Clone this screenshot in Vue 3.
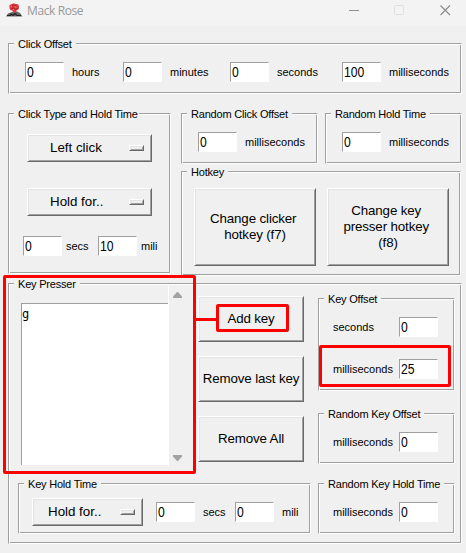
<script setup>
import { ref } from 'vue'

const offsets = ref([
  { value: '0', unit: 'hours' },
  { value: '0', unit: 'minutes' },
  { value: '0', unit: 'seconds' },
  { value: '100', unit: 'milliseconds' },
])
const hotkeys = ['Change clicker \nhotkey (f7)', 'Change key \npresser hotkey \n(f8)']
const keyActions = ['Add key', 'Remove last key', 'Remove All']
const keys = ref(['g'])
</script>

<template>
  <div class="window">
    <header class="titlebar">
      <svg class="logo" width="17" height="15" viewBox="0 0 17 15">
        <path d="M0 13.500 2 10.500 5 9.500 7 8.500 11 8.500 14 10 16.500 13.500Z" fill="#666" />
        <path d="M1 12.500h3l1-1.500 2 1.500 2-2 2 2h4" fill="none" stroke="#222" stroke-width="1.200" />
        <path d="M3.500 2 6 1 7.500.3 9.500 1 12 1.200 13 3 12.800 6 10.500 7.500 10 9.500H7.500L7 8 4.500 7 3.500 5.500Z" fill="#dd3a42" />
        <path d="M6 3 8.500 2l2.500 1.500M5 5.500l3-.5 1.500 1.500L12 5" fill="none" stroke="#9c1e26" stroke-width=".8" />
        <path d="M5 3.500h1M9 4h1.500M7 6.500h1" stroke="#f3878b" />
      </svg>
      <span class="title">Mack Rose</span>
      <svg class="controls" width="102" height="12" viewBox="0 0 102 12">
        <path d="M0 5.500h10" stroke="#8f8f8f" />
        <rect x="45.500" y=".5" width="9" height="9" rx="1" fill="none" stroke="#dedede" />
        <path d="m91.500.5 9.500 9.500m0-9.500-9.500 9.500" stroke="#8a8a8a" stroke-width="1.100" fill="none" />
      </svg>
    </header>

    <main>
      <section class="group">
        <h2>Click Offset</h2>
        <div class="fields offsets">
          <label v-for="o in offsets" :key="o.unit" class="field">
            <span class="entry"><b>{{ o.value }}</b></span>{{ o.unit }}
          </label>
        </div>
      </section>

      <div class="middle">
        <section class="group click-type">
          <h2 class="tight">Click Type and Hold Time</h2>
          <div class="select">Left click<i></i></div>
          <div class="select">Hold for..<i></i></div>
          <div class="durations">
            <label class="field"><span class="entry"><b>0</b></span>secs</label>
            <label class="field"><span class="entry"><b>10</b></span>mili</label>
          </div>
        </section>
        <div class="middle-right">
          <div class="pair">
            <section class="group small">
              <h2>Random Click Offset</h2>
              <div class="fields"><label class="field"><span class="entry"><b>0</b></span>milliseconds</label></div>
            </section>
            <section class="group small">
              <h2>Random Hold Time</h2>
              <div class="fields"><label class="field"><span class="entry"><b>0</b></span>milliseconds</label></div>
            </section>
          </div>
          <section class="group hotkey">
            <h2>Hotkey</h2>
            <div class="hotkey-buttons">
              <div v-for="h in hotkeys" :key="h" class="button">{{ h }}</div>
            </div>
          </section>
        </div>
      </div>

      <section class="group presser">
        <h2>Key Presser</h2>
        <div class="upper">
          <div class="list"><div v-for="k in keys" :key="k">{{ k }}</div></div>
          <div class="scroll">
            <svg width="10" height="6" viewBox="0 0 10 6"><path d="M4 0h1l4 4.500V6H0V4.500Z" fill="#a3a3a3" /></svg>
            <svg width="10" height="6" viewBox="0 0 10 6"><path d="M4 6h1l4-4.500V0H0v1.500Z" fill="#a3a3a3" /></svg>
          </div>
          <div class="actions">
            <div v-for="a in keyActions" :key="a" class="button">{{ a }}</div>
          </div>
          <div class="side">
            <section class="group small tall">
              <h2>Key Offset</h2>
              <div class="reverse">
                <label>seconds<span class="entry"><b>0</b></span></label>
                <label>milliseconds<span class="entry"><b>25</b></span></label>
              </div>
            </section>
            <section class="group small">
              <h2>Random Key Offset</h2>
              <div class="reverse"><label>milliseconds<span class="entry"><b>0</b></span></label></div>
            </section>
          </div>
        </div>
        <div class="lower">
          <section class="group hold">
            <h2>Key Hold Time</h2>
            <div class="hold-row">
              <div class="select">Hold for..<i></i></div>
              <label class="field"><span class="entry"><b>0</b></span>secs</label>
              <label class="field"><span class="entry"><b>0</b></span>mili</label>
            </div>
          </section>
          <section class="group small">
            <h2>Random Key Hold Time</h2>
            <div class="reverse"><label>milliseconds<span class="entry"><b>0</b></span></label></div>
          </section>
        </div>
      </section>
    </main>

    <div class="mark mark-list"></div>
    <div class="mark-line"></div>
    <div class="mark mark-add"></div>
    <div class="mark mark-ms"></div>
  </div>
</template>

<style>
body { margin: 0; background: #f0f0f0; }
</style>

<style scoped>
* { box-sizing: border-box; }
.window {
  position: relative;
  width: 466px;
  height: 553px;
  overflow: hidden;
  background: #f0f0f0;
  color: #000;
  font: 11px/12px "Liberation Sans", Arial, sans-serif;
}
.titlebar {
  display: flex;
  height: 26px;
  padding: 2px 15px 0 6px;
  background: #f3f3f3;
}
.logo { margin-top: 1px; }
.title {
  margin-left: 4px;
  color: #999;
  font: 12px/17px "Open Sans", "Noto Sans", sans-serif;
  letter-spacing: -.4px;
}
.controls { margin: 3px 0 0 auto; }
main { padding: 17px 4px 0 8px; }

.group {
  display: flex;
  flex-direction: column;
  align-items: flex-start;
  height: 51px;
  border: 1px solid #a0a0a0;
  border-right-color: #fff;
  border-bottom-color: #fff;
  box-shadow: inset 1px 1px #fff, inset -1px -1px #a0a0a0;
  padding: 1px;
}
h2 {
  flex: none;
  height: 12px;
  margin: -7px 0 0 4px;
  padding: 0 4px;
  background: #f0f0f0;
  font: inherit;
  letter-spacing: -.2px;
  white-space: nowrap;
}
.tight { padding-right: 1px; }
.fields { padding: 12px 0 0 15px; }
.offsets { display: grid; grid-template-columns: 98px 107px 112px auto; }
.field { display: flex; align-items: center; gap: 8px; }
.entry {
  flex: none;
  width: 39px;
  height: 20px;
  padding-left: 1px;
  border: 1px solid #a0a0a0;
  border-right-color: #fff;
  border-bottom-color: #fff;
  background: #fff;
  font-size: 14px;
  line-height: 19px;
}
.entry b {
  display: inline-block;
  font-weight: 400;
  transform: scaleX(.87);
  transform-origin: 0 50%;
}

.middle { display: flex; gap: 10px; margin-top: 19px; }
.click-type { width: 163px; height: 161px; }
.middle-right { width: 281px; }
.pair { display: flex; gap: 7px; }
.small { width: 137px; }
.hotkey { width: 280px; height: 105px; margin-top: 7px; }
.hotkey-buttons { display: flex; gap: 11px; padding: 10px 0 0 11px; }
.button, .select {
  display: flex;
  align-items: center;
  border: 1px solid #fff;
  border-right-color: #696969;
  border-bottom-color: #696969;
  box-shadow: inset 1px 1px #e3e3e3, inset -1px -1px #a0a0a0;
  font-size: 13.33px;
}
.button {
  justify-content: center;
  width: 122px;
  height: 78px;
  padding-bottom: 1px;
  line-height: 16px;
  letter-spacing: -.13px;
  text-align: center;
  white-space: pre;
}
.select {
  flex: none;
  justify-content: space-between;
  width: 125px;
  height: 28px;
  margin: 14px 0 0 17px;
  padding: 0 7px 0 22px;
}
.select + .select { margin-top: 26px; }
.select i {
  width: 15px;
  height: 6px;
  border: 1px solid #fff;
  border-right-color: #696969;
  border-bottom-color: #696969;
  box-shadow: inset 1px 1px #e3e3e3, inset -1px -1px #a0a0a0;
}
.durations { display: grid; grid-template-columns: 75px auto; padding: 20px 0 0 13px; }
.durations .field { gap: 4px; }

.presser { width: 454px; height: 261px; margin-top: 7px; }
.upper { display: flex; align-items: flex-start; height: 193px; padding-left: 11px; }
.list {
  width: 147px;
  height: 162px;
  margin-top: 13px;
  padding: 3px 0 0;
  border-top: 1px solid #a0a0a0;
  border-left: 1px solid #a0a0a0;
  background: #fff;
  font: 12px/14px "DejaVu Sans Mono", monospace;
}
.scroll {
  display: flex;
  flex-direction: column;
  justify-content: space-between;
  width: 18px;
  height: 180px;
  margin-top: -4px;
  padding: 6px 0 5px 4px;
  border-left: 1px solid #fff;
}
.actions { display: grid; gap: 14px; margin: 6px 0 0 12px; }
.actions .button { width: 106px; height: 46px; padding-bottom: 0; }
.side { display: grid; gap: 22px; margin: 8px 0 0 14px; }
.tall { height: 93px; }
.reverse { display: grid; gap: 22px; padding: 12px 0 0 13px; }
.reverse label { display: grid; grid-template-columns: 66px 39px; align-items: center; }
.lower { display: flex; gap: 7px; padding-left: 8px; }
.hold { width: 293px; }
.hold-row { display: flex; align-items: center; padding: 8px 0 0 12px; }
.hold-row .select { width: 111px; margin: 0 13px 0 0; padding-left: 15px; }
.hold-row .field { width: 79px; }

.mark { position: absolute; border: 3px solid #f00; border-radius: 2px; }
.mark-list { left: 3px; top: 275px; width: 193px; height: 199px; }
.mark-add { left: 216px; top: 304px; width: 73px; height: 28px; }
.mark-ms { left: 319px; top: 345px; width: 132px; height: 42px; }
.mark-line { position: absolute; left: 195px; top: 318px; width: 22px; height: 3px; background: #f00; }
</style>
